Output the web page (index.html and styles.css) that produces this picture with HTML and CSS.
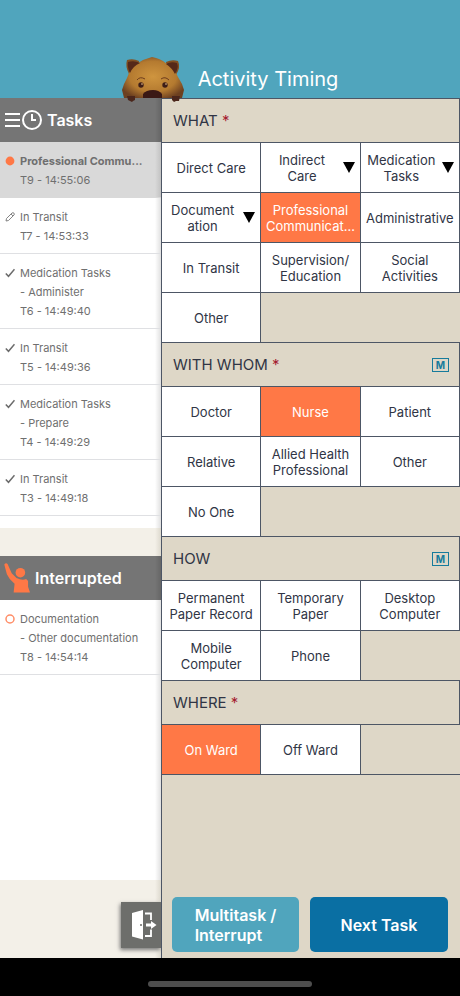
FILE: index.html
```html
<!DOCTYPE html>
<html lang="en">
<head>
<meta charset="utf-8">
<meta name="viewport" content="width=device-width, initial-scale=1">
<title>Activity Timing</title>
<link rel="stylesheet" href="styles.css">
</head>
<body>
<header class="app-header">
  <svg class="mascot" viewBox="0 0 64 46" aria-hidden="true">
    <defs>
      <radialGradient id="fur" cx="50%" cy="48%" r="58%">
        <stop offset="0" stop-color="#cf953f"/>
        <stop offset="0.65" stop-color="#b47a30"/>
        <stop offset="1" stop-color="#6d4020"/>
      </radialGradient>
    </defs>
    <path d="M6 3 Q12 1 18 4 L16 17 L8 17 Q4 9 6 3Z" fill="#815022"/>
    <path d="M57 4 Q51 2 45 5 L47 18 L55 18 Q60 10 57 4Z" fill="#815022"/>
    <path d="M17 6 L22 3 L25 2 L28 1 L31 0 L35 1 L38 2 L42 4 L46 7 Q54 12 57 20 L61 27 L63 33 L61 41 H3 L1 33 L3 27 L6 21 Q9 11 17 6Z" fill="url(#fur)"/>
    <path d="M7 5 Q13 3 19 6 Q12 9 9 16 Q6 10 7 5Z M56 6 Q50 4 45 7 Q51 11 54 17 Q58 11 56 6Z" fill="#552919"/>
    <path d="M16 23 Q19 19 24 22 M40 22 Q44 19 48 23" fill="none" stroke="#6d3c1d" stroke-width="1"/>
    <circle cx="20" cy="28" r="2.700" fill="#3d1d17"/><circle cx="44" cy="28" r="2.700" fill="#3d1d17"/>
    <circle cx="21" cy="27" r="1" fill="#ad8460"/><circle cx="45" cy="27" r="1" fill="#ad8460"/>
    <path d="M22 41 V37 Q25 33 32 33 Q38 33 41 37 V41Z" fill="#3b1915"/>
    <path d="M6 39 H14 V43 L12 44 L11 45 L9 44 L7 43Z M51 39 H59 L58 44 L55 44 L53 45 L51 43Z" fill="#4b261b"/>
  </svg>
  <h1 class="app-title">Activity Timing</h1>
</header>

<div class="workspace">
  <aside class="sidebar">
    <section class="panel">
      <header class="panel-head">
        <button class="menu" aria-label="Task menu">
          <svg width="38" height="20" viewBox="0 0 38 20" fill="none" stroke="#fff" stroke-width="2">
            <path d="M1 4 H16 M1 10 H16 M1 16 H16"/>
            <circle cx="28" cy="10" r="9"/>
            <path d="M28 4 V10 H32"/>
          </svg>
        </button>
        <h2 class="panel-title">Tasks</h2>
      </header>
      <ul class="tasks">
        <li class="task current"><svg class="mark" viewBox="0 0 10 10"><circle cx="5" cy="5" r="4.4" fill="#ff7846"/></svg><b>Professional Commu...</b><span>T9 - 14:55:06</span></li>
        <li class="task"><svg class="mark" viewBox="0 0 10 10" fill="none" stroke="#777" stroke-width=".9"><path d="M1 9 L1.5 6.5 L7 1 Q8 .3 9 1.2 Q9.700 2.100 9 3 L3.500 8.500Z M6 2 L8 4"/></svg><span>In Transit</span><span>T7 - 14:53:33</span></li>
        <li class="task"><svg class="mark" viewBox="0 0 10 10" fill="none" stroke="#6b6b6b" stroke-width="1.5"><path d="M.8 5.500 L3.500 8.300 L9.500 1.300"/></svg><span>Medication Tasks</span><span>- Administer</span><span>T6 - 14:49:40</span></li>
        <li class="task"><svg class="mark" viewBox="0 0 10 10" fill="none" stroke="#6b6b6b" stroke-width="1.5"><path d="M.8 5.500 L3.500 8.300 L9.500 1.300"/></svg><span>In Transit</span><span>T5 - 14:49:36</span></li>
        <li class="task"><svg class="mark" viewBox="0 0 10 10" fill="none" stroke="#6b6b6b" stroke-width="1.5"><path d="M.8 5.500 L3.500 8.300 L9.500 1.300"/></svg><span>Medication Tasks</span><span>- Prepare</span><span>T4 - 14:49:29</span></li>
        <li class="task"><svg class="mark" viewBox="0 0 10 10" fill="none" stroke="#6b6b6b" stroke-width="1.5"><path d="M.8 5.500 L3.500 8.300 L9.500 1.300"/></svg><span>In Transit</span><span>T3 - 14:49:18</span></li>
      </ul>
    </section>
    <section class="panel interrupted">
      <header class="panel-head">
        <svg width="26" height="32" viewBox="0 0 27 32" aria-hidden="true">
          <path d="M.3 2 Q2-.3 3.700 1.500 L8 11 L13 16 Q19 19 23 17 L25 19 V25 L27 31 H10 L11 22 L6 17 L3 12Z" fill="#ff7846"/>
          <circle cx="17" cy="10.500" r="5" fill="#ff7846"/>
        </svg>
        <h2 class="panel-title">Interrupted</h2>
      </header>
      <ul class="tasks">
        <li class="task"><svg class="mark" viewBox="0 0 10 10"><circle cx="5" cy="5" r="4" fill="none" stroke="#ff8d67" stroke-width="1.500"/></svg><span>Documentation</span><span>- Other documentation</span><span>T8 - 14:54:14</span></li>
      </ul>
    </section>
    <div class="sidebar-foot">
      <button class="exit" aria-label="Exit">
        <svg width="26" height="30" viewBox="0 0 26 30">
          <path d="M1 3 L12 0 V29.500 L1 26.500Z" fill="#fff"/>
          <circle cx="10" cy="15" r="1" fill="#6b6b68"/>
          <path d="M14 3.500 H20 V10 M14 26 H20 V19.500" fill="none" stroke="#fff" stroke-width="1.800"/>
          <path d="M15 13.500 H20 V11 L25.500 15 L20 19 V16.500 H15Z" fill="#fff"/>
        </svg>
      </button>
    </div>
  </aside>

  <main class="main">
    <section>
      <header class="group-head"><h2 class="group-title">WHAT <span class="required">*</span></h2></header>
      <div class="options">
        <button class="option">Direct Care</button>
        <button class="option more"><span>Indirect<br>Care</span></button>
        <button class="option more"><span>Medication Tasks</span></button>
        <button class="option more"><span>Document<br>ation</span></button>
        <button class="option selected" aria-pressed="true">Professional Communicat...</button>
        <button class="option">Administrative</button>
        <button class="option">In Transit</button>
        <button class="option">Supervision/<wbr>Education</button>
        <button class="option">Social<br>Activities</button>
        <button class="option">Other</button>
      </div>
    </section>
    <section>
      <header class="group-head"><h2 class="group-title">WITH WHOM <span class="required">*</span></h2><span class="multi">M</span></header>
      <div class="options">
        <button class="option">Doctor</button>
        <button class="option selected" aria-pressed="true">Nurse</button>
        <button class="option">Patient</button>
        <button class="option">Relative</button>
        <button class="option">Allied Health Professional</button>
        <button class="option">Other</button>
        <button class="option">No One</button>
      </div>
    </section>
    <section>
      <header class="group-head"><h2 class="group-title">HOW</h2><span class="multi">M</span></header>
      <div class="options">
        <button class="option">Permanent Paper Record</button>
        <button class="option">Temporary Paper</button>
        <button class="option">Desktop Computer</button>
        <button class="option">Mobile Computer</button>
        <button class="option">Phone</button>
      </div>
    </section>
    <section>
      <header class="group-head"><h2 class="group-title">WHERE <span class="required">*</span></h2></header>
      <div class="options">
        <button class="option selected" aria-pressed="true">On Ward</button>
        <button class="option">Off Ward</button>
      </div>
    </section>
    <div class="actions">
      <button class="action multitask"><span>Multitask /<br>Interrupt</span></button>
      <button class="action next">Next Task</button>
    </div>
  </main>
</div>
<footer class="system-bar"><div class="home-indicator"></div></footer>
</body>
</html>
```
FILE: styles.css
```css
* { box-sizing: border-box; }
body {
  margin: 0;
  min-height: 100vh;
  display: flex;
  flex-direction: column;
  font-family: Inter, "Liberation Sans", sans-serif;
  background: #000;
  color: #303545;
}
h1, h2, ul { margin: 0; padding: 0; }
button { font: inherit; color: inherit; border: 0; padding: 0; margin: 0; cursor: pointer; }
svg { display: block; }

.app-header {
  position: relative;
  display: flex;
  justify-content: center;
  padding: 64px 0 4px 76px;
  background: #50a5bd;
}
.app-title { font-size: 20px; line-height: 30px; font-weight: 400; color: #fff; }
.mascot { position: absolute; left: 121px; bottom: -5px; width: 64px; height: 46px; z-index: 2; }

.workspace { flex: 1; display: grid; grid-template-columns: 161px minmax(0, 1fr); }

.sidebar {
  display: flex;
  flex-direction: column;
  background: linear-gradient(to left, #ddd9ce, #f3f0e8 6px);
}
.panel { background: linear-gradient(to left, #e0e0e0, #fff 6px); }
.panel:first-child { padding-bottom: 12px; margin-bottom: 28px; }
.interrupted { flex: 1; }
.panel-head {
  display: flex;
  align-items: center;
  gap: 5px;
  height: 44px;
  padding-left: 4px;
  background: linear-gradient(to left, #666, #757575 6px);
  color: #fff;
}
.panel-title { font-size: 16px; line-height: 20px; font-weight: 600; }
.menu { background: none; }
.tasks { list-style: none; }
.task {
  position: relative;
  display: flex;
  flex-direction: column;
  padding: 10px 0 7px 20px;
  border-bottom: 1px solid #dfe0e3;
  font-size: 11px;
  line-height: 19px;
  white-space: nowrap;
  color: #6f6f6f;
}
.current { background: linear-gradient(to left, #c2c2c2, #d9d9d9 6px); border-bottom-color: #d9d9d9; }
.mark { position: absolute; left: 5px; top: 14px; width: 10px; height: 10px; }

.sidebar-foot { display: flex; justify-content: flex-end; padding: 22px 0 10px; }
.exit {
  display: flex;
  align-items: center;
  justify-content: flex-end;
  width: 40px;
  height: 46px;
  padding-right: 4px;
  background: #6d6e6b;
  box-shadow: -1px 2px 4px #777;
}

.main {
  display: flex;
  flex-direction: column;
  border: solid #4d5665;
  border-width: 1px 0 0 1px;
  background: #ded7c7;
}
.group-head {
  display: flex;
  align-items: center;
  justify-content: space-between;
  height: 44px;
  padding: 0 10px 0 11px;
  border: solid #4d5665;
  border-width: 0 1px 1px 0;
}
.group-title { font-size: 15px; line-height: 20px; font-weight: 400; }
.required { color: #a51c30; }
.multi {
  width: 17px;
  border: 1px solid #167b9c;
  font-size: 10px;
  line-height: 12px;
  font-weight: 700;
  text-align: center;
  color: #167b9c;
}
.options {
  display: grid;
  grid-template-columns: repeat(3, minmax(0, 1fr));
  grid-auto-rows: 50px;
  box-shadow: inset 0 -1px #4d5665;
}
.option {
  padding: 0 2px;
  background: #fff;
  border: solid #4d5665;
  border-width: 0 1px 1px 0;
  font-size: 13px;
  line-height: 16px;
}
.more { display: flex; align-items: center; justify-content: space-between; padding: 0 5px 0 0; }
.more span { flex: 1; min-width: 0; }
.more::after {
  content: "";
  border: solid transparent;
  border-width: 11px 6px 0;
  border-top-color: #000;
}
.selected { background: #ff7846; color: #fff; }

.actions { display: flex; gap: 11px; margin-top: auto; padding: 0 12px 6px 10px; }
.action { flex: 138; height: 55px; border-radius: 5px; font-size: 16px; line-height: 20px; font-weight: 600; color: #fff; }
.multitask { flex-grow: 127; background: #50a5bd; }
.multitask span { display: inline-block; text-align: left; }
.next { background: #0a6fa3; }

.system-bar { display: flex; justify-content: center; padding: 23px 0 9px; background: #000; }
.home-indicator { width: 164px; height: 6px; border-radius: 3px; background: #4d4d4d; }
```
